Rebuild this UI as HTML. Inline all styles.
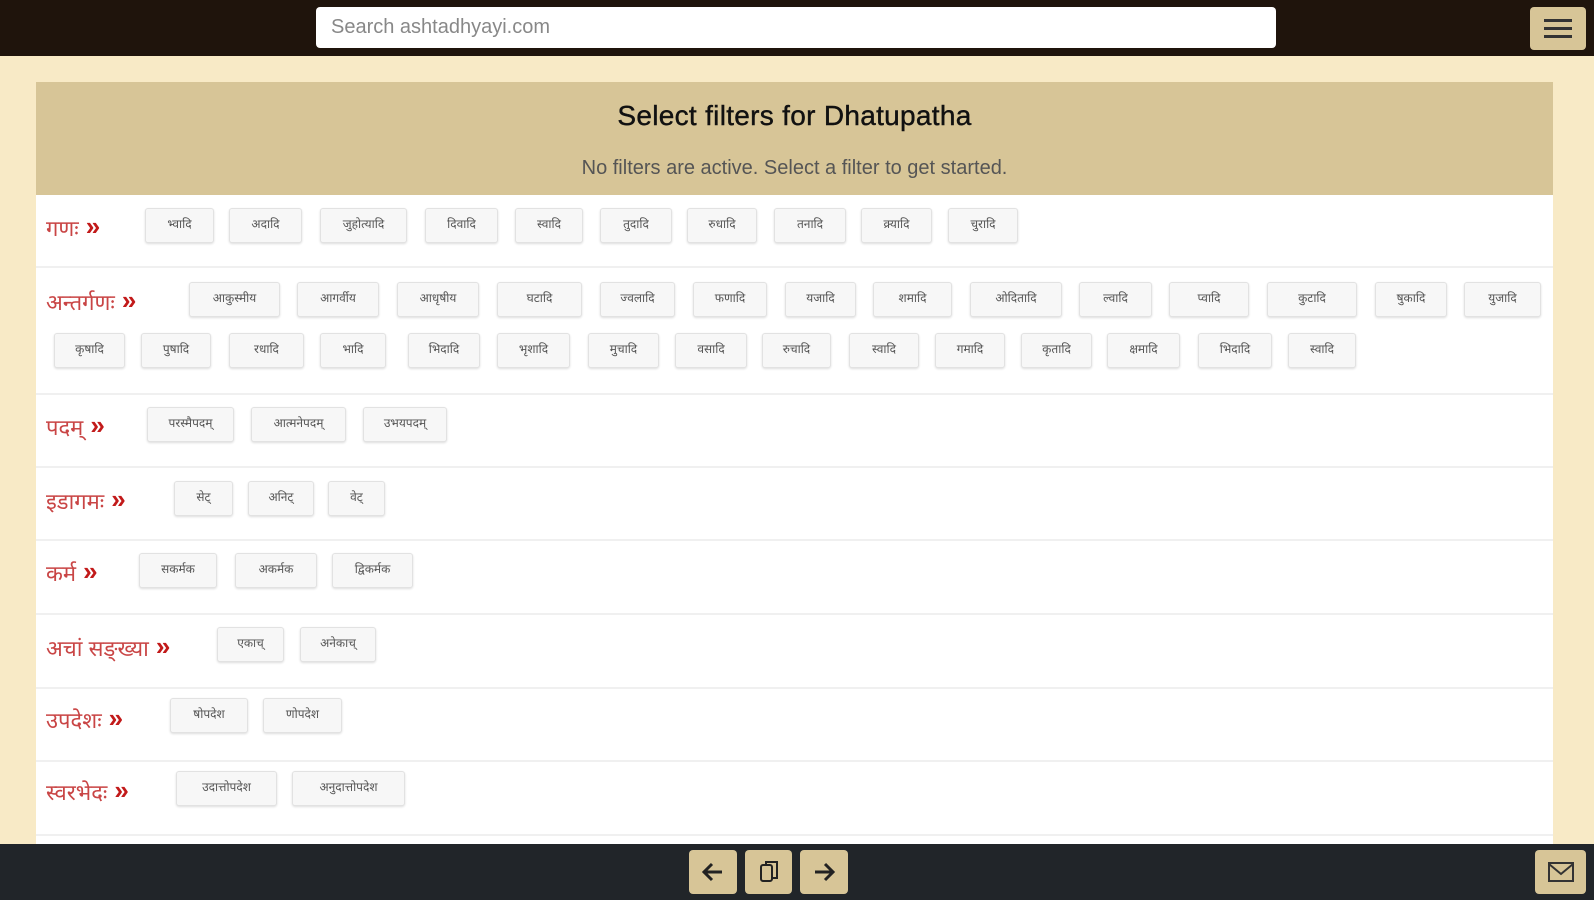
<!DOCTYPE html>
<html><head><meta charset="utf-8"><style>
*{box-sizing:border-box;margin:0;padding:0}
body{width:1594px;height:900px;background:#f8eac6;font-family:"Liberation Sans",sans-serif;position:relative;overflow:hidden}
.hdr{position:absolute;left:0;top:0;width:1594px;height:56px;background:#1f140c}
.search{position:absolute;left:316px;top:7px;width:960px;height:41px;background:#fff;border-radius:4px;color:#888;font-size:20px;line-height:41px;padding-left:15px}
.menu{position:absolute;left:1530px;top:7px;width:56px;height:43px;background:#d7c597;border-radius:4px}
.menu i{position:absolute;left:14px;width:28px;height:3px;background:#333}
.panel{position:absolute;left:36px;top:82px;width:1517px;height:762px;background:#fff}
.ph{position:absolute;left:0;top:0;width:100%;height:113px;background:#d7c597;text-align:center}
.ph h1{font-size:28px;font-weight:normal;color:#111;position:absolute;top:18px;width:100%;letter-spacing:0.3px;-webkit-text-stroke:0.4px #111}
.ph p{font-size:20px;color:#555;position:absolute;top:75px;width:100%}
.sep{position:absolute;left:36px;width:1517px;height:2px;background:#f0f0f0}
.lbl{position:absolute;left:46px;color:#c94545;font-size:22px;font-family:"Liberation Sans","Noto Sans CJK SC",sans-serif;white-space:nowrap}
.lbl b{color:#c21a1a;font-size:26px;font-weight:900;margin-left:7px;position:relative;top:-1px}
.b{position:absolute;height:35px;background:#f7f7f7;border:1px solid #e2e2e2;border-radius:3px;box-shadow:0 1px 2px #ddd;font-size:12px;color:#555;text-align:center;line-height:31px;white-space:nowrap;overflow:hidden}
.ftr{position:absolute;left:0;top:844px;width:1594px;height:56px;background:#212529}
.fb{position:absolute;top:6px;height:44px;background:#d7c597;border-radius:4px;display:flex;align-items:center;justify-content:center}
</style></head><body>
<div class="hdr"><div class="search">Search ashtadhyayi.com</div>
<div class="menu"><i style="top:12px"></i><i style="top:20px"></i><i style="top:28px"></i></div></div>
<div class="panel"><div class="ph"><h1>Select filters for Dhatupatha</h1><p>No filters are active. Select a filter to get started.</p></div></div>
<div class="sep" style="top:266px"></div><div class="sep" style="top:393px"></div><div class="sep" style="top:466px"></div><div class="sep" style="top:539px"></div><div class="sep" style="top:613px"></div><div class="sep" style="top:687px"></div><div class="sep" style="top:760px"></div><div class="sep" style="top:834px"></div>

<div class="lbl" style="top:212px">गणः<b>»</b></div>
<div class="b" style="top:208px;left:145px;width:69px">भ्वादि</div><div class="b" style="top:208px;left:229px;width:73px">अदादि</div><div class="b" style="top:208px;left:320px;width:87px">जुहोत्यादि</div><div class="b" style="top:208px;left:425px;width:73px">दिवादि</div><div class="b" style="top:208px;left:515px;width:68px">स्वादि</div><div class="b" style="top:208px;left:600px;width:72px">तुदादि</div><div class="b" style="top:208px;left:687px;width:70px">रुधादि</div><div class="b" style="top:208px;left:774px;width:72px">तनादि</div><div class="b" style="top:208px;left:861px;width:71px">क्र्यादि</div><div class="b" style="top:208px;left:948px;width:70px">चुरादि</div>

<div class="lbl" style="top:286px">अन्तर्गणः<b>»</b></div>
<div class="b" style="top:282px;left:189px;width:91px">आकुस्मीय</div><div class="b" style="top:282px;left:297px;width:82px">आगर्वीय</div><div class="b" style="top:282px;left:397px;width:82px">आधृषीय</div><div class="b" style="top:282px;left:497px;width:85px">घटादि</div><div class="b" style="top:282px;left:600px;width:75px">ज्वलादि</div><div class="b" style="top:282px;left:693px;width:74px">फणादि</div><div class="b" style="top:282px;left:785px;width:71px">यजादि</div><div class="b" style="top:282px;left:873px;width:79px">शमादि</div><div class="b" style="top:282px;left:970px;width:92px">ओदितादि</div><div class="b" style="top:282px;left:1079px;width:73px">ल्वादि</div><div class="b" style="top:282px;left:1169px;width:80px">प्वादि</div><div class="b" style="top:282px;left:1267px;width:90px">कुटादि</div><div class="b" style="top:282px;left:1375px;width:72px">षुकादि</div><div class="b" style="top:282px;left:1464px;width:77px">युजादि</div>
<div class="b" style="top:333px;left:54px;width:71px">कृषादि</div><div class="b" style="top:333px;left:141px;width:70px">पुषादि</div><div class="b" style="top:333px;left:229px;width:75px">रधादि</div><div class="b" style="top:333px;left:320px;width:66px">भादि</div><div class="b" style="top:333px;left:408px;width:72px">भिदादि</div><div class="b" style="top:333px;left:497px;width:73px">भृशादि</div><div class="b" style="top:333px;left:588px;width:71px">मुचादि</div><div class="b" style="top:333px;left:675px;width:72px">वसादि</div><div class="b" style="top:333px;left:762px;width:69px">रुचादि</div><div class="b" style="top:333px;left:849px;width:70px">स्वादि</div><div class="b" style="top:333px;left:935px;width:70px">गमादि</div><div class="b" style="top:333px;left:1021px;width:71px">कृतादि</div><div class="b" style="top:333px;left:1107px;width:73px">क्षमादि</div><div class="b" style="top:333px;left:1198px;width:74px">भिदादि</div><div class="b" style="top:333px;left:1288px;width:68px">स्वादि</div>

<div class="lbl" style="top:411px">पदम्<b>»</b></div>
<div class="b" style="top:407px;left:147px;width:87px">परस्मैपदम्</div><div class="b" style="top:407px;left:251px;width:95px">आत्मनेपदम्</div><div class="b" style="top:407px;left:363px;width:84px">उभयपदम्</div>

<div class="lbl" style="top:485px">इडागमः<b>»</b></div>
<div class="b" style="top:481px;left:174px;width:59px">सेट्</div><div class="b" style="top:481px;left:248px;width:66px">अनिट्</div><div class="b" style="top:481px;left:328px;width:57px">वेट्</div>

<div class="lbl" style="top:557px">कर्म<b>»</b></div>
<div class="b" style="top:553px;left:139px;width:78px">सकर्मक</div><div class="b" style="top:553px;left:235px;width:82px">अकर्मक</div><div class="b" style="top:553px;left:332px;width:81px">द्विकर्मक</div>

<div class="lbl" style="top:632px">अचां सङ्ख्या<b>»</b></div>
<div class="b" style="top:627px;left:217px;width:67px">एकाच्</div><div class="b" style="top:627px;left:300px;width:76px">अनेकाच्</div>

<div class="lbl" style="top:704px">उपदेशः<b>»</b></div>
<div class="b" style="top:698px;left:170px;width:78px">षोपदेश</div><div class="b" style="top:698px;left:263px;width:79px">णोपदेश</div>

<div class="lbl" style="top:776px">स्वरभेदः<b>»</b></div>
<div class="b" style="top:771px;left:176px;width:101px">उदात्तोपदेश</div><div class="b" style="top:771px;left:292px;width:113px">अनुदात्तोपदेश</div>

<div class="ftr">
<div class="fb" style="left:689px;width:48px"><svg width="26" height="24" viewBox="0 0 26 24"><path d="M22 12H5M12 4L4 12l8 8" stroke="#222" stroke-width="3" fill="none"/></svg></div>
<div class="fb" style="left:745px;width:47px"><svg width="22" height="26" viewBox="0 0 22 26"><rect x="3" y="6" width="11" height="16" rx="2" stroke="#222" stroke-width="2" fill="none"/><path d="M8 6V3h11v16h-5" stroke="#222" stroke-width="2" fill="none"/></svg></div>
<div class="fb" style="left:800px;width:48px"><svg width="26" height="24" viewBox="0 0 26 24"><path d="M4 12h17M14 4l8 8-8 8" stroke="#222" stroke-width="3" fill="none"/></svg></div>
<div class="fb" style="left:1535px;width:51px"><svg width="28" height="22" viewBox="0 0 28 22"><rect x="2" y="2" width="24" height="18" stroke="#333" stroke-width="2" fill="none"/><path d="M2 3l12 10 12-10" stroke="#333" stroke-width="2" fill="none"/></svg></div>
</div>
</body></html>
